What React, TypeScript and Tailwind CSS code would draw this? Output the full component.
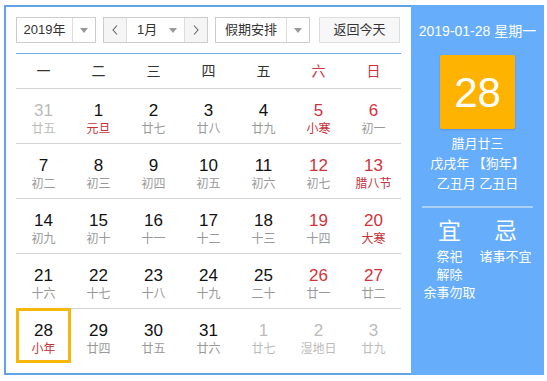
const font = { fontFamily: '"Liberation Sans", "Noto Sans CJK SC", sans-serif' }

type Day = { n: number; l: string; red?: boolean; lred?: boolean; other?: boolean; sel?: boolean }

const weeks: Day[][] = [
  [
    { n: 31, l: "廿五", other: true },
    { n: 1, l: "元旦", lred: true },
    { n: 2, l: "廿七" },
    { n: 3, l: "廿八" },
    { n: 4, l: "廿九" },
    { n: 5, l: "小寒", red: true, lred: true },
    { n: 6, l: "初一", red: true },
  ],
  [
    { n: 7, l: "初二" },
    { n: 8, l: "初三" },
    { n: 9, l: "初四" },
    { n: 10, l: "初五" },
    { n: 11, l: "初六" },
    { n: 12, l: "初七", red: true },
    { n: 13, l: "腊八节", red: true, lred: true },
  ],
  [
    { n: 14, l: "初九" },
    { n: 15, l: "初十" },
    { n: 16, l: "十一" },
    { n: 17, l: "十二" },
    { n: 18, l: "十三" },
    { n: 19, l: "十四", red: true },
    { n: 20, l: "大寒", red: true, lred: true },
  ],
  [
    { n: 21, l: "十六" },
    { n: 22, l: "十七" },
    { n: 23, l: "十八" },
    { n: 24, l: "十九" },
    { n: 25, l: "二十" },
    { n: 26, l: "廿一", red: true },
    { n: 27, l: "廿二", red: true },
  ],
  [
    { n: 28, l: "小年", lred: true, sel: true },
    { n: 29, l: "廿四" },
    { n: 30, l: "廿五" },
    { n: 31, l: "廿六" },
    { n: 1, l: "廿七", other: true },
    { n: 2, l: "湿地日", other: true },
    { n: 3, l: "廿九", other: true },
  ],
]

const Caret = () => (
  <svg width="8" height="5" viewBox="0 0 8 5">
    <path d="M0 0h8L4 5z" fill="#999" />
  </svg>
)

const Chevron = ({ left }: { left?: boolean }) => (
  <svg width="6" height="10" viewBox="0 0 6 10">
    <path d={left ? "M5 0.5L1 5l4 4.5" : "M1 0.5L5 5l-4 4.5"} fill="none" stroke="#666" strokeWidth="1.1" />
  </svg>
)

export default function App() {
  return (
    <div className="pl-[4px] pt-[5px]" style={font}>
      <div className="flex w-[540px] h-[370px] border-2 border-[#5fa3ea] bg-white">
        {/* calendar */}
        <div className="w-[405px] px-[10px] pt-[10px]">
          <div className="flex h-[26px] text-[13px] text-[#333]">
            <div className="flex w-[80px] border border-[#ccc] bg-white">
              <div className="flex w-[55px] items-center justify-center">2019年</div>
              <div className="flex flex-1 items-center justify-center border-l border-[#ddd]"><Caret /></div>
            </div>
            <div className="ml-[7px] flex w-[105px] border border-[#ccc]">
              <div className="flex w-[22px] items-center justify-center bg-[#f5f5f5]"><Chevron left /></div>
              <div className="flex flex-1 items-center border-x border-[#ddd] bg-white pl-[10px] pr-[7px]">
                <span className="flex-1">1月</span>
                <Caret />
              </div>
              <div className="flex w-[22px] items-center justify-center bg-[#f5f5f5]"><Chevron /></div>
            </div>
            <div className="ml-[7px] flex w-[95px] border border-[#ccc] bg-white">
              <div className="flex w-[70px] items-center justify-center">假期安排</div>
              <div className="flex flex-1 items-center justify-center border-l border-[#ddd]"><Caret /></div>
            </div>
            <div className="ml-[9px] flex w-[81px] items-center justify-center border border-[#ddd] bg-[#f7f7f7]">返回今天</div>
          </div>

          <div className="mt-[10px] border-t border-[#6aaeea]" />

          <div className="grid h-[34px] grid-cols-7 items-center text-center text-[14px] text-[#333]">
            {["一", "二", "三", "四", "五", "六", "日"].map((w, i) => (
              <div key={w} className={i > 4 ? "text-[#d0333d]" : ""}>{w}</div>
            ))}
          </div>

          {weeks.map((row, ri) => (
            <div key={ri} className="grid h-[55px] grid-cols-7 border-t border-[#d3d3d3]">
              {row.map((d, ci) => (
                <div key={ci} className="relative flex flex-col items-center pt-[12px]">
                  {d.sel && <div className="absolute -top-px inset-x-0 bottom-0 border-[3px] border-[#f6b70c]" />}
                  <div className={`text-[17px] leading-[20px] ${d.other ? "text-[#bbb]" : d.red ? "text-[#d0333d]" : "text-[#111]"}`}>{d.n}</div>
                  <div className={`text-[12px] leading-[16px] ${d.other ? "text-[#bbb]" : d.lred ? "text-[#c8303a]" : "text-[#999]"}`}>{d.l}</div>
                </div>
              ))}
            </div>
          ))}
        </div>

        {/* side panel */}
        <div className="-my-[2px] -mr-[2px] flex w-[133px] flex-col items-center bg-[#66adfc] pt-[16px] text-white">
          <div className="text-[14px] leading-[20px]">2019-01-28 星期一</div>
          <div className="mt-[14px] flex h-[74px] w-[75px] items-center justify-center rounded-[2px] bg-[#fdb300] text-[42px] shadow-[0_1px_2px_rgba(0,0,0,0.15)]">28</div>
          <div className="mt-[5px] text-center text-[13px] leading-[20px]">
            <div>腊月廿三</div>
            <div>戊戌年 【狗年】</div>
            <div>乙丑月 乙丑日</div>
          </div>
          <div className="mt-[12px] w-[111px] border-t-2 border-[#a9d0fb]" />
          <div className="mt-[9px] flex w-[112px] text-center">
            <div className="w-[56px]">
              <div className="text-[23px] leading-[28px]">宜</div>
              <div className="mt-[3px] text-[13px] leading-[18px]">
                <div>祭祀</div>
                <div>解除</div>
                <div>余事勿取</div>
              </div>
            </div>
            <div className="w-[56px]">
              <div className="text-[23px] leading-[28px]">忌</div>
              <div className="mt-[3px] text-[13px] leading-[18px]">
                <div>诸事不宜</div>
              </div>
            </div>
          </div>
        </div>
      </div>
    </div>
  )
}
